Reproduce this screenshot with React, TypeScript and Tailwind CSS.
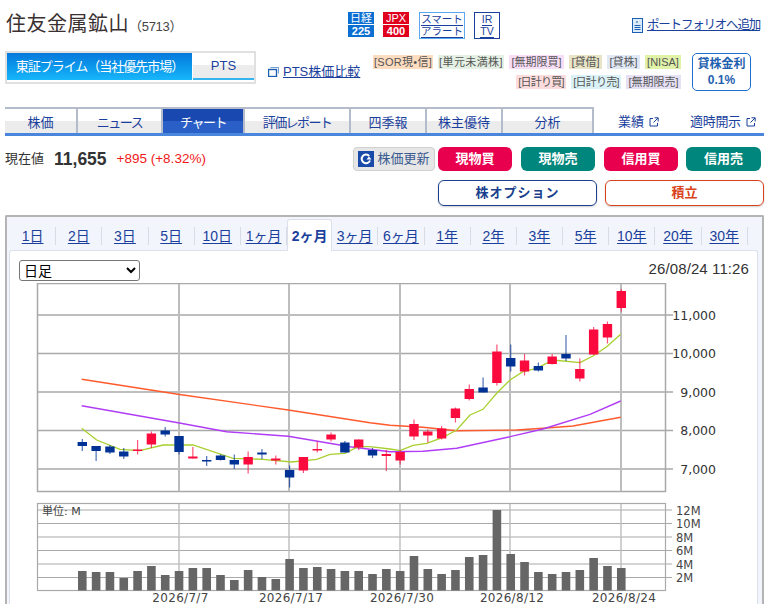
const NAV = [
    { label: "株価", w: "w-[73px]" },
    { label: "ニュース", w: "w-[85px] tracking-[-1.5px]" },
    { label: "チャート", w: "w-[82px] tracking-[-1.5px]", active: true },
    { label: "評価レポート", w: "w-[106px] tracking-[-1.6px]" },
    { label: "四季報", w: "w-[76px]" },
    { label: "株主優待", w: "w-[76px]" },
    { label: "分析", w: "w-[91px]" },
];

const TABS = ["1日", "2日", "3日", "5日", "10日", "1ヶ月", "2ヶ月", "3ヶ月", "6ヶ月", "1年", "2年", "3年", "5年", "10年", "20年", "30年"];

// x comes from the index, everything else is picture pixels: [bodyTop, bodyBottom, wickTop, wickBottom, up]
const CANDLES: [number, number, number, number, boolean][] = [
    [442, 446, 439, 451, false], [446, 451, 446, 461, false], [446.5, 452.5, 445, 454, false], [451.5, 456.5, 448, 459, false],
    [449.5, 451, 440, 454.5, true], [433.5, 444.5, 431.5, 448, true], [430.5, 434.5, 427, 436.5, false], [436, 452, 436, 454.5, false],
    [456.5, 458.5, 447, 458.5, true], [460, 461.5, 456, 466, false], [455.5, 460, 454.5, 460.5, false], [460, 464.5, 454.5, 469, false],
    [457, 464.5, 451.5, 473.5, true], [452.5, 454.5, 449, 459, false], [458.5, 460.5, 455.5, 464.5, true], [470, 477.5, 465.5, 487.5, false],
    [457, 470.5, 457, 473, true], [449, 450.5, 441.5, 452.5, true], [434.5, 439.5, 432.5, 441.5, true], [442.5, 452.5, 441, 452.5, false],
    [439.5, 447.5, 439.5, 450, true], [450, 455.5, 448, 458, false], [454, 456, 450, 471, true], [452, 460.5, 450, 464.5, true],
    [424, 436.5, 419.5, 440, true], [431.5, 435.5, 429.5, 442.5, true], [428.5, 438.5, 426, 439.5, true], [408.5, 418, 407.5, 422.5, true],
    [389, 399, 384.5, 400.5, true], [387.5, 392.5, 377.5, 392.5, false], [351.5, 383, 344.5, 385.5, true], [358, 366.5, 344.5, 371.5, false],
    [360.5, 371.5, 354, 375.5, true], [366, 370.5, 362.5, 371.5, false], [356.5, 364, 354, 364.5, true], [354, 358.5, 335, 361, false],
    [369, 378.5, 358.5, 381.5, true], [329.5, 354.5, 327, 355, true], [324, 337.5, 321.5, 343.5, true], [291, 308, 289, 311.5, true],
];

const VOLUME_TOPS = [571, 572, 572, 578, 571, 566, 575, 571, 568, 568, 575, 580, 570, 577, 579, 559, 568, 567, 569, 571, 571, 574, 569, 571, 556, 569, 574, 570, 557, 555, 510, 554, 562, 572, 574, 572, 570, 558, 566, 568];

const ORANGE = "81.7,379.3 178,394.3 288.3,410 370,422.7 390,425.3 423,427.3 456.7,430.7 516.7,430 543,428.3 573,426 620.7,417.3";
const PURPLE = "81.7,405.7 178,422.7 226.7,431.7 288.3,436.3 350,446.7 370,449.3 390,451.7 423,451.3 456.7,448.3 503,438.3 543,429 590,414.3 620.7,401";
const GREEN = "81.7,428.3 96.7,440 120,449.3 140,450.7 163,445 193,445 233,458.3 263,459.3 291.7,462 316.7,459.3 330,454.3 345,453.3 358,446.7 370,446.7 390,449 400,450.7 413,445.3 426.7,443.3 443,437.3 456.7,430 470,415 483,409.3 496.7,393.3 510,380 523,371.7 536.7,368.3 553,360 580,362.7 593,356 606.7,346.7 620.7,334.3";

const V_GRID = [179, 289, 400, 510, 621];
const PRICE_GRID = [
    { y: 315, label: "11,000" }, { y: 353.5, label: "10,000" }, { y: 392, label: "9,000" }, { y: 430.5, label: "8,000" }, { y: 469, label: "7,000" },
];
const VOL_GRID = [
    { y: 510, label: "12M" }, { y: 523.5, label: "10M" }, { y: 537, label: "8M" }, { y: 550.5, label: "6M" }, { y: 564, label: "4M" }, { y: 577.5, label: "2M" },
];
const DATES = [
    { x: 180.5, label: "2026/7/7" }, { x: 291, label: "2026/7/17" }, { x: 402, label: "2026/7/30" }, { x: 512, label: "2026/8/12" }, { x: 624, label: "2026/8/24" },
];

const barX = (i: number) => 82.3 + i * 13.82;

function Chart() {
    return (
        <svg viewBox="9 283 749 321" className="-ml-px block h-[321px] w-[749px]">
            <g stroke="#a9a9a9" strokeWidth="1.5">
                <rect x="37.5" y="283.5" width="628" height="208" fill="none" />
                {PRICE_GRID.map((g) => (
                    <line key={g.y} x1="37" x2="673" y1={g.y} y2={g.y} />
                ))}
            </g>
            <g stroke="#bdbdbd" strokeWidth="2">
                {V_GRID.map((x) => (
                    <line key={x} x1={x} x2={x} y1="284" y2="491" />
                ))}
            </g>
            <polyline points={ORANGE} fill="none" stroke="#ff5a2c" strokeWidth="1.4" />
            <polyline points={PURPLE} fill="none" stroke="#b03cf5" strokeWidth="1.4" />
            <polyline points={GREEN} fill="none" stroke="#a8cf2e" strokeWidth="1.3" />
            {CANDLES.map(([top, bottom, wickTop, wickBottom, up], i) => {
                const color = up ? "#fb0a3e" : "#003296";
                return (
                    <g key={i}>
                        <line x1={barX(i)} x2={barX(i)} y1={wickTop} y2={wickBottom} stroke={color} strokeOpacity="0.7" strokeWidth="1.2" />
                        <rect x={barX(i) - 4.7} y={top} width="9.4" height={bottom - top} fill={color} />
                    </g>
                );
            })}
            <g fontFamily="'DejaVu Sans', sans-serif" fontSize="12.5" fill="#333">
                {PRICE_GRID.map((g) => (
                    <text key={g.y} x="716" y={g.y + 4.5} textAnchor="end">{g.label}</text>
                ))}
            </g>

            <rect x="37.5" y="503.5" width="628" height="87" fill="none" stroke="#a9a9a9" strokeWidth="1.2" />
            <g stroke="#a9a9a9" strokeWidth="1.2">
                {VOL_GRID.map((g) => (
                    <line key={g.y} x1="37" x2="672" y1={g.y} y2={g.y} />
                ))}
            </g>
            <g stroke="#bdbdbd" strokeWidth="1.4">
                {V_GRID.map((x) => (
                    <line key={x} x1={x} x2={x} y1="504" y2="590" />
                ))}
            </g>
            {VOLUME_TOPS.map((top, i) => (
                <rect key={i} x={barX(i) - 4.3} y={top} width="8.6" height={590.5 - top} fill="#666" />
            ))}
            <text x="42" y="515" fontFamily="'DejaVu Sans', 'Noto Sans CJK JP', sans-serif" fontSize="11" fill="#444">単位: M</text>
            <g fontFamily="'DejaVu Sans', sans-serif" fontSize="11.5" fill="#444">
                {VOL_GRID.map((g) => (
                    <text key={g.y} x="676" y={g.y + 4.5}>{g.label}</text>
                ))}
            </g>
            <g fontFamily="'DejaVu Sans', sans-serif" fontSize="12" fill="#444">
                {DATES.map((d) => (
                    <text key={d.label} x={d.x} y="602" textAnchor="middle" letterSpacing="0.3">{d.label}</text>
                ))}
            </g>
        </svg>
    );
}

function IndexBadge({ top, bottom, className }: { top: string; bottom: string; className: string }) {
    return (
        <div className={`flex h-[26px] w-[26px] flex-col items-center justify-center text-[11px] leading-[12px] ${className}`}>
            <span className="w-full border-b border-current text-center">{top}</span>
            <span className="w-full border-b border-current text-center font-bold">{bottom}</span>
        </div>
    );
}

function Tag({ children, className }: { children: string; className: string }) {
    return <span className={`flex h-[14px] items-center justify-center whitespace-nowrap text-[11px] leading-[14px] text-[#555] ${className}`}>{children}</span>;
}

function ExtIcon() {
    return (
        <svg viewBox="0 0 10 10" className="h-[10px] w-[10px]" fill="none" stroke="#1a3f9c" strokeWidth="1">
            <path d="M4 1.5H1v7.5h7.5V6" />
            <path d="M5.5 .8h3.7v3.7M9 1 4.5 5.5" />
        </svg>
    );
}

function TradeButton({ label, className }: { label: string; className: string }) {
    return (
        <div className={`flex h-[24px] w-[74px] items-center justify-center rounded-md text-[13px] font-bold text-white ${className}`}>
            {label}
        </div>
    );
}

export default function App() {
    return (
        <div className="h-[604px] w-[774px] overflow-hidden bg-white font-['Liberation_Sans','Noto_Sans_CJK_JP',sans-serif] text-[#333]">
            {/* title row */}
            <div className="flex h-[51px] items-start pl-[6px] pr-[14px] pt-[12px]">
                <div className="flex w-[342px] items-baseline">
                    <h1 className="text-[20px] leading-[24px] tracking-[0.5px] text-[#3a3030]">住友金属鉱山</h1>
                    <span className="text-[13px] tracking-[-0.3px] text-[#444]">（5713）</span>
                </div>
                <IndexBadge top="日経" bottom="225" className="bg-[#0b6fd2] text-white" />
                <IndexBadge top="JPX" bottom="400" className="ml-[9px] bg-[#e0001e] text-white" />
                <div className="ml-[10px] flex h-[27px] w-[46px] flex-col items-center justify-center border border-[#5aa9f0] text-[10.5px] leading-[11px] text-[#1a3f9c]">
                    <span className="border-b border-[#1a3f9c]">スマート</span>
                    <span className="border-b border-[#1a3f9c]">アラート</span>
                </div>
                <div className="ml-[9px] flex h-[27px] w-[26px] flex-col items-center justify-center border border-[#1a3f9c] text-[10.5px] leading-[11px] text-[#1a3f9c]">
                    <span className="border-b border-[#1a3f9c]">IR</span>
                    <span className="border-b border-[#1a3f9c]">TV</span>
                </div>
                <a className="ml-auto mt-[5px] flex items-center gap-[4px] text-[12.5px] leading-[16px] tracking-[-1.2px] text-[#1a3f9c] underline">
                    <svg viewBox="0 0 11 15" className="h-[15px] w-[11px]">
                        <rect x=".5" y=".5" width="10" height="14" fill="#dcebfa" stroke="#1a5fb0" />
                        <path d="M5 3v2M2.5 7.5h6M2.5 9.5h6M2.5 11.5h6" stroke="#1a5fb0" />
                    </svg>
                    ポートフォリオへ追加
                </a>
            </div>

            {/* market tabs and tags */}
            <div className="flex h-[56px] items-start pl-[5px]">
                <div className="flex h-[33px] w-[251px] border-2 border-[#e0e0e0] bg-white">
                    <div className="flex h-[27px] w-[185px] items-center justify-center bg-gradient-to-b from-[#0878dc] to-[#18b6fa] text-[13px] tracking-[-1px] text-white">東証プライム（当社優先市場）</div>
                    <div className="ml-px flex h-[27px] w-[61px] items-center justify-center border-b-2 border-[#35b4ee] bg-gradient-to-b from-white from-50% to-[#ececec] to-50% text-[13px] text-[#1a3f9c]">PTS</div>
                </div>
                <a className="ml-[12px] mt-[13px] flex items-center gap-[4px] text-[13px] leading-[16px] text-[#1a3f9c] underline">
                    <svg viewBox="0 0 11 10" className="h-[10px] w-[11px]" fill="none" stroke="#1a5fb0">
                        <path d="M2.5 .5h8v6" strokeOpacity=".6" />
                        <rect x=".5" y="2.5" width="8" height="7" strokeWidth="1.4" />
                    </svg>
                    PTS株価比較
                </a>
                <div className="ml-auto mr-[11px] flex w-[308px] flex-col items-end gap-[6px] pt-[4px]">
                    <div className="flex gap-[5px]">
                        <Tag className="w-[60px] bg-[#fddcc0] tracking-[0.3px]">[SOR現•信]</Tag>
                        <Tag className="w-[66px] bg-[#e4f0e4] tracking-[0.4px]">[単元未満株]</Tag>
                        <Tag className="w-[55px] bg-[#f7def6]">[無期限買]</Tag>
                        <Tag className="w-[33px] bg-[#e9e4c6]">[貸借]</Tag>
                        <Tag className="w-[33px] bg-[#e0e8f5]">[貸株]</Tag>
                        <Tag className="w-[36px] bg-[#e0f2a8]">[NISA]</Tag>
                    </div>
                    <div className="flex gap-[5px]">
                        <Tag className="w-[50px] bg-[#fcdcdc] tracking-[-0.8px]">[日計り買]</Tag>
                        <Tag className="w-[50px] bg-[#daf2f7] tracking-[-0.8px]">[日計り売]</Tag>
                        <Tag className="w-[55px] bg-[#e6e0f5]">[無期限売]</Tag>
                    </div>
                </div>
                <div className="mr-[23px] mt-[2px] flex h-[38px] w-[59px] flex-col items-center justify-center rounded-[5px] border border-[#1a6fd0] text-[12px] font-bold leading-[16px] text-[#1f5fb0]">
                    <span>貸株金利</span>
                    <span>0.1%</span>
                </div>
            </div>

            {/* nav */}
            <div className="ml-[5px] flex h-[29px] w-[759px] border-b-[3px] border-[#4a86dc]">
                <div className="flex border-t-2 border-[#b4bccb]">
                    {NAV.map((item) => (
                        <div
                            key={item.label}
                            className={`flex h-[24px] items-center justify-center border-r-2 border-[#b4bccb] pt-[3px] text-[13px] ${item.w} ${
                                item.active
                                    ? "bg-gradient-to-b from-[#1848b0] from-50% to-[#2a5fc8] to-50% text-white"
                                    : "bg-gradient-to-b from-white from-50% to-[#ececec] to-50% text-[#1a3f9c]"
                            }`}
                        >
                            {item.label}
                        </div>
                    ))}
                </div>
                <div className="flex flex-1 items-center pt-[3px] text-[13px] text-[#1a3f9c]">
                    <span className="ml-[24px] flex items-center gap-[5px]">業績<ExtIcon /></span>
                    <span className="ml-[31px] flex items-center gap-[5px] tracking-[-0.3px]">適時開示<ExtIcon /></span>
                </div>
            </div>

            {/* price and order buttons */}
            <div className="mt-[11px] flex items-start pl-[5px]">
                <div className="flex h-[24px] items-center">
                    <span className="text-[13px]">現在値</span>
                    <span className="ml-[10px] text-[17.5px] font-bold text-[#333]">11,655</span>
                    <span className="ml-[10px] text-[13.5px] text-[#f01818]">+895 (+8.32%)</span>
                </div>
                <div className="ml-auto mr-[13px] flex flex-col items-end gap-[9px]">
                    <div className="flex">
                        <div className="mr-[3px] flex h-[24px] w-[82px] items-center justify-center gap-[3px] rounded-sm border border-[#d0d0d0] bg-[#e6e6e6] text-[13px] text-[#3a5a90]">
                            <svg viewBox="0 0 16 16" className="h-[16px] w-[16px] shrink-0">
                                <rect width="16" height="16" fill="#1a4aa8" />
                                <path d="M12 9.5A4.3 4.3 0 1 1 11.2 5" fill="none" stroke="#fff" strokeWidth="2" />
                                <path d="M13.5 8.5H8.5l2.5-3z" fill="#fff" />
                            </svg>
                            株価更新
                        </div>
                        <TradeButton label="現物買" className="bg-[#e8004e]" />
                        <TradeButton label="現物売" className="ml-[9px] bg-[#00867c]" />
                        <TradeButton label="信用買" className="ml-[9px] bg-[#e8004e]" />
                        <TradeButton label="信用売" className="ml-[8px] w-[75px] bg-[#00867c]" />
                    </div>
                    <div className="mr-[-3px] flex gap-[8px] text-[13px] font-bold">
                        <div className="flex h-[26px] w-[159px] items-center justify-center rounded-md border border-[#1a3f8c] tracking-[1px] text-[#1a3f8c] shadow-[0_1px_2px_#0003]">株オプション</div>
                        <div className="flex h-[26px] w-[159px] items-center justify-center rounded-md border border-[#d9421a] text-[#d9421a] shadow-[0_1px_2px_#0003]">積立</div>
                    </div>
                </div>
            </div>

            {/* chart card */}
            <div className="ml-[5px] mt-[9px] h-[400px] w-[759px] rounded-t-[2px] border-2 border-b-0 border-[#b4b4b4] bg-[#f2f5fb] pl-[2px] pr-[3px]">
                <div className="flex h-[33px] items-end pl-px">
                    {TABS.map((tab) => (
                        <div
                            key={tab}
                            className={
                                tab === "2ヶ月"
                                    ? "relative z-10 -mb-px flex h-[32px] w-[45px] items-center justify-center rounded-t-[3px] border border-b-0 border-[#dbe0ea] bg-white pt-[2px] text-[14px] font-bold text-[#1a3f9c]"
                                    : "mb-[5px] flex h-[18px] w-[46.2px] items-center justify-center border-r border-[#d8dce4] text-[14px] text-[#1a3f9c]"
                            }
                        >
                            <span className={tab === "2ヶ月" ? "" : "underline underline-offset-2"}>{tab}</span>
                        </div>
                    ))}
                </div>
                <div className="h-[366px] w-[749px] rounded-t-[3px] border border-b-0 border-[#dbe0ea] bg-white">
                    <div className="flex h-[32px] items-start justify-between pl-[9px] pr-[8px] pt-[9px]">
                        <select defaultValue="日足" className="h-[21px] w-[121px] rounded-[3px] border border-[#767676] bg-white text-[14px] leading-[19px] text-black">
                            <option>日足</option>
                            <option>週足</option>
                            <option>月足</option>
                        </select>
                        <span className="text-[15px] leading-[18px] tracking-[0.1px] text-[#333]">26/08/24 11:26</span>
                    </div>
                    <Chart />
                </div>
            </div>
        </div>
    );
}
